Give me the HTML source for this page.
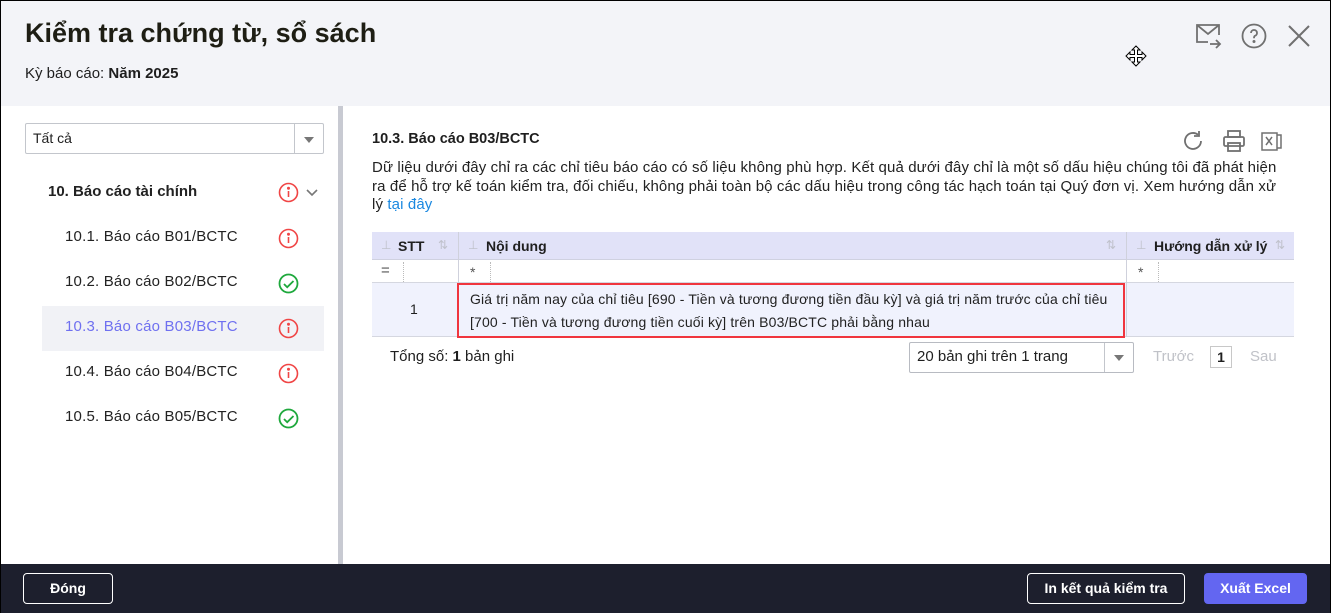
<!DOCTYPE html>
<html><head><meta charset="utf-8"><style>
*{box-sizing:border-box;margin:0;padding:0}
body{width:1331px;height:613px;overflow:hidden;font-family:"Liberation Sans",sans-serif;color:#1f1f1f;background:#fff;position:relative}
.frame{position:absolute;left:0;top:0;width:1331px;height:613px;border:1px solid #000;border-bottom:none;pointer-events:none;z-index:9}
.hdr{position:absolute;left:0;top:0;width:1331px;height:106px;background:#f3f4f8}
.abs{position:absolute}
.t{position:absolute;white-space:nowrap}
.side{position:absolute;left:0;top:106px;width:338px;height:458px;background:#fff}
.div{position:absolute;left:338px;top:106px;width:5px;height:458px;background:#c8cad2}
.foot{position:absolute;left:0;top:564px;width:1331px;height:49px;background:#1d1f2d}
.btn{position:absolute;top:573px;height:31px;border:1px solid #fff;border-radius:4px;color:#fff;font-weight:bold;font-size:14px;text-align:center;line-height:29px}
.item{position:absolute;left:65px;font-size:15px;letter-spacing:0.2px;color:#222}
.ic{position:absolute;left:278px}
</style></head><body>
<div class="hdr"></div>
<div class="t" style="left:25px;top:18px;font-size:27px;font-weight:bold;color:#1e1e14">Kiểm tra chứng từ, sổ sách</div>
<div class="t" style="left:25px;top:65px;font-size:15px;color:#1e1e1e">Kỳ báo cáo: <b>Năm 2025</b></div>
<svg class="abs" style="left:1195px;top:23px" width="28" height="26" viewBox="0 0 28 26" fill="none" stroke="#707070" stroke-width="1.8"><path d="M13 19H2V2h22v10"/><path d="M2 2l11 9 11-9"/><path d="M15 21h10M21 17l4 4-4 4"/></svg>
<svg class="abs" style="left:1241px;top:23px" width="26" height="26" viewBox="0 0 26 26" fill="none" stroke="#707070" stroke-width="1.8"><circle cx="13" cy="13" r="11.5"/><path d="M10 10a3 3 0 1 1 4 2.8c-1 .4-1 1.2-1 2.4"/><circle cx="13" cy="18.5" r=".6" fill="#707070"/></svg>
<svg class="abs" style="left:1288px;top:25px" width="22" height="22" viewBox="0 0 22 22" stroke="#707070" stroke-width="2"><path d="M1 1l20 20M21 1L1 21"/></svg>
<svg class="abs" style="left:1125px;top:45px" width="22" height="22" viewBox="0 0 22 22" fill="#fff" stroke="#000" stroke-width="1"><path d="M11 1l4 4h-2.5v4.5H17V7l4 4-4 4v-2.5h-4.5V17H15l-4 4-4-4h2.5v-4.5H5V15l-4-4 4-4v2.5h4.5V5H7z"/></svg>

<div class="side"></div>
<div class="div"></div>
<div class="abs" style="left:25px;top:123px;width:299px;height:31px;border:1px solid #c3c6cc;border-radius:2px;background:#fff"></div>
<div class="abs" style="left:294px;top:124px;width:1px;height:29px;background:#c3c6cc"></div>
<div class="t" style="left:33px;top:130px;font-size:14px">Tất cả</div>
<div class="abs" style="left:304px;top:137px;width:0;height:0;border-left:5px solid transparent;border-right:5px solid transparent;border-top:6px solid #777"></div>

<div class="t" style="left:48px;top:183px;font-size:15px;font-weight:bold;color:#222">10. Báo cáo tài chính</div>
<svg class="abs" style="left:278px;top:182px" width="21" height="21" viewBox="0 0 21 21" fill="none" stroke="#f04545" stroke-width="1.6"><circle cx="10.5" cy="10.5" r="9"/><path d="M10.5 9v6"/><circle cx="10.5" cy="6.2" r=".7" fill="#f04545"/></svg>
<svg class="abs" style="left:305px;top:188px" width="14" height="10" viewBox="0 0 14 10" fill="none" stroke="#777" stroke-width="1.6"><path d="M2 2l5 5 5-5"/></svg>

<div class="abs" style="left:42px;top:306px;width:282px;height:45px;background:#f1f2f6"></div>
<div class="item t" style="top:228px">10.1. Báo cáo B01/BCTC</div>
<div class="item t" style="top:273px">10.2. Báo cáo B02/BCTC</div>
<div class="item t" style="top:318px;color:#6f70f0">10.3. Báo cáo B03/BCTC</div>
<div class="item t" style="top:363px">10.4. Báo cáo B04/BCTC</div>
<div class="item t" style="top:408px">10.5. Báo cáo B05/BCTC</div>
<svg class="ic" style="top:228px" width="21" height="21" viewBox="0 0 21 21" fill="none" stroke="#f04545" stroke-width="1.6"><circle cx="10.5" cy="10.5" r="9"/><path d="M10.5 9v6"/><circle cx="10.5" cy="6.2" r=".7" fill="#f04545"/></svg>
<svg class="ic" style="top:273px" width="21" height="21" viewBox="0 0 21 21" fill="none" stroke="#1ea83c" stroke-width="1.8"><circle cx="10.5" cy="10.5" r="9"/><path d="M6 11l3.2 3.2L15.5 8"/></svg>
<svg class="ic" style="top:318px" width="21" height="21" viewBox="0 0 21 21" fill="none" stroke="#f04545" stroke-width="1.6"><circle cx="10.5" cy="10.5" r="9"/><path d="M10.5 9v6"/><circle cx="10.5" cy="6.2" r=".7" fill="#f04545"/></svg>
<svg class="ic" style="top:363px" width="21" height="21" viewBox="0 0 21 21" fill="none" stroke="#f04545" stroke-width="1.6"><circle cx="10.5" cy="10.5" r="9"/><path d="M10.5 9v6"/><circle cx="10.5" cy="6.2" r=".7" fill="#f04545"/></svg>
<svg class="ic" style="top:408px" width="21" height="21" viewBox="0 0 21 21" fill="none" stroke="#1ea83c" stroke-width="1.8"><circle cx="10.5" cy="10.5" r="9"/><path d="M6 11l3.2 3.2L15.5 8"/></svg>

<div class="t" style="left:372px;top:131px;font-size:14.5px;font-weight:bold;color:#1e1e1e">10.3. Báo cáo B03/BCTC</div>
<svg class="abs" style="left:1181px;top:129px" width="24" height="24" viewBox="0 0 24 24" fill="none" stroke="#707070" stroke-width="1.8"><path d="M20 12a8 8 0 1 1-3-6.3"/><path d="M18 2v5h-5"/></svg>
<svg class="abs" style="left:1222px;top:129px" width="24" height="24" viewBox="0 0 24 24" fill="none" stroke="#707070" stroke-width="1.8"><rect x="6" y="2" width="12" height="6"/><rect x="2" y="8" width="20" height="9" rx="1.5"/><rect x="6" y="14" width="12" height="8"/></svg>
<svg class="abs" style="left:1261px;top:130px" width="22" height="22" viewBox="0 0 22 22" fill="none" stroke="#707070" stroke-width="1.5"><path d="M1 3h15v17H1z"/><path d="M16 5h4v13h-4"/><path d="M5 7l6 8M11 7l-6 8"/></svg>
<div class="abs" style="left:372px;top:159px;white-space:nowrap;font-size:15px;letter-spacing:0.12px;line-height:18.5px;color:#222">Dữ liệu dưới đây chỉ ra các chỉ tiêu báo cáo có số liệu không phù hợp. Kết quả dưới đây chỉ là một số dấu hiệu chúng tôi đã phát hiện<br>ra để hỗ trợ kế toán kiểm tra, đối chiếu, không phải toàn bộ các dấu hiệu trong công tác hạch toán tại Quý đơn vị. Xem hướng dẫn xử<br>lý <span style="color:#1a88e0">tại đây</span></div>

<div class="abs" style="left:372px;top:232px;width:922px;height:28px;background:#e1e2f8;border-bottom:1px solid #cfd1e0"></div>
<div class="abs" style="left:372px;top:260px;width:922px;height:23px;background:#fff;border-bottom:1px solid #d5d7e0"></div>
<div class="abs" style="left:372px;top:283px;width:922px;height:54px;background:#f0f2fd;border-bottom:1px solid #d5d7e0"></div>
<div class="abs" style="left:458px;top:232px;width:1px;height:51px;background:#cfd1dc"></div>
<div class="abs" style="left:1126px;top:232px;width:1px;height:105px;background:#cfd1dc"></div>
<div class="abs" style="left:403px;top:262px;width:0;height:20px;border-left:1px dotted #bbb"></div>
<div class="abs" style="left:490px;top:262px;width:0;height:20px;border-left:1px dotted #bbb"></div>
<div class="abs" style="left:1158px;top:262px;width:0;height:20px;border-left:1px dotted #bbb"></div>
<div class="t" style="left:381px;top:238px;font-size:12px;color:#c0c2cc">⊥</div>
<div class="t" style="left:398px;top:238px;font-size:14px;font-weight:bold">STT</div>
<div class="t" style="left:438px;top:238px;font-size:12px;color:#c0c2cc">⇅</div>
<div class="t" style="left:468px;top:238px;font-size:12px;color:#c0c2cc">⊥</div>
<div class="t" style="left:486px;top:238px;font-size:14px;font-weight:bold">Nội dung</div>
<div class="t" style="left:1106px;top:238px;font-size:12px;color:#c0c2cc">⇅</div>
<div class="t" style="left:1136px;top:238px;font-size:12px;color:#c0c2cc">⊥</div>
<div class="t" style="left:1154px;top:238px;font-size:14px;font-weight:bold">Hướng dẫn xử lý</div>
<div class="t" style="left:1275px;top:238px;font-size:12px;color:#c0c2cc">⇅</div>
<div class="t" style="left:381px;top:262px;font-size:15px;color:#555">=</div>
<div class="t" style="left:470px;top:264px;font-size:14px;color:#555">*</div>
<div class="t" style="left:1138px;top:264px;font-size:14px;color:#555">*</div>
<div class="t" style="left:410px;top:301px;font-size:14px">1</div>
<div class="abs" style="left:457px;top:283px;width:668px;height:55px;border:2px solid #f0353e"></div>
<div class="t" style="left:470px;top:288px;font-size:14px;letter-spacing:0.15px;line-height:23px;color:#222">Giá trị năm nay của chỉ tiêu [690 - Tiền và tương đương tiền đầu kỳ] và giá trị năm trước của chỉ tiêu<br>[700 - Tiền và tương đương tiền cuối kỳ] trên B03/BCTC phải bằng nhau</div>

<div class="t" style="left:390px;top:348px;font-size:15px">Tổng số: <b>1</b> bản ghi</div>
<div class="abs" style="left:909px;top:342px;width:225px;height:31px;border:1px solid #b8bbc2;border-radius:2px"></div>
<div class="abs" style="left:1104px;top:343px;width:1px;height:29px;background:#c3c6cc"></div>
<div class="t" style="left:917px;top:348px;font-size:15px">20 bản ghi trên 1 trang</div>
<div class="abs" style="left:1114px;top:355px;border-left:5px solid transparent;border-right:5px solid transparent;border-top:6px solid #777"></div>
<div class="t" style="left:1153px;top:348px;font-size:15px;color:#c0c2c8">Trước</div>
<div class="abs" style="left:1210px;top:346px;width:22px;height:22px;border:1px solid #c8c8c8;font-size:14px;font-weight:bold;text-align:center;line-height:20px">1</div>
<div class="t" style="left:1250px;top:348px;font-size:15px;color:#c0c2c8">Sau</div>

<div class="foot"></div>
<div class="btn" style="left:23px;width:90px">Đóng</div>
<div class="btn" style="left:1027px;width:158px">In kết quả kiểm tra</div>
<div class="btn" style="left:1204px;width:103px;background:#6366f1;border-color:#6366f1">Xuất Excel</div>
<div class="frame"></div>
</body></html>
